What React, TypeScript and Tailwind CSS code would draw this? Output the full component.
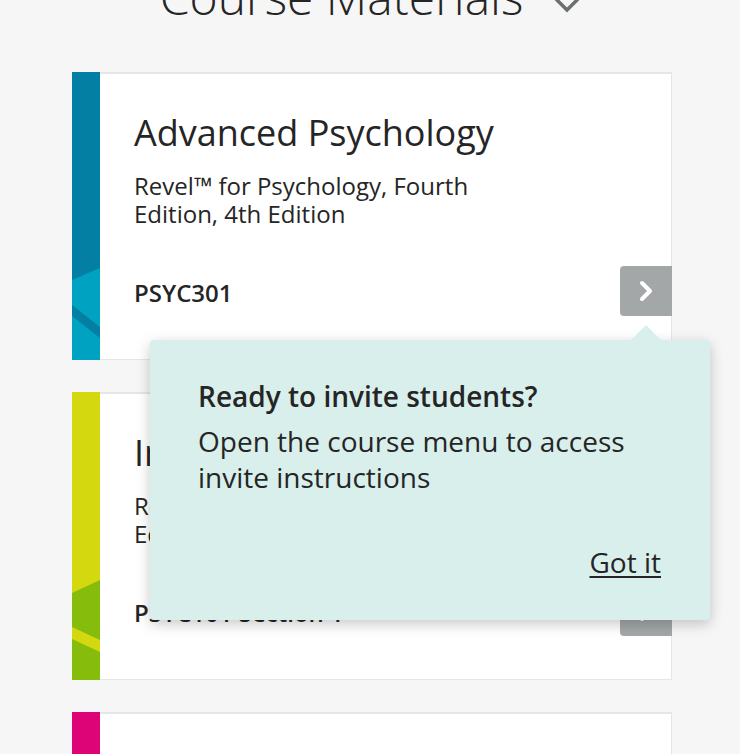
import { ChevronRight } from 'lucide-react';

type Course = {
  title: string;
  book: string;
  code: string;
  stripe: 'teal' | 'lime' | 'pink';
};

const courses: Course[] = [
  {
    title: 'Advanced Psychology',
    book: 'Revel™ for Psychology, Fourth Edition, 4th Edition',
    code: 'PSYC301',
    stripe: 'teal',
  },
  {
    title: 'Introduction to Psychology',
    book: 'Revel™ for Psychology, Fourth Edition, 4th Edition',
    code: 'PSYC101 Section 1',
    stripe: 'lime',
  },
  {
    title: 'Social Psychology',
    book: 'Revel™ for Social Psychology',
    code: 'PSYC210',
    stripe: 'pink',
  },
];

function Stripe({ kind }: { kind: Course['stripe'] }) {
  if (kind === 'pink') {
    return <div className="w-[28px] shrink-0 bg-[#dc0477]" />;
  }
  const teal = kind === 'teal';
  return (
    <svg className="w-[28px] shrink-0 h-full" viewBox="0 0 28 288" preserveAspectRatio="none">
      <rect width="28" height="288" fill={teal ? '#037fa3' : '#d3d90e'} />
      {teal ? (
        <>
          <polygon points="0,208 28,196 28,288 0,288" fill="#00a2c2" />
          <polygon points="0,233 28,255 28,266 0,244" fill="#037fa3" />
        </>
      ) : (
        <>
          <polygon points="0,201 28,188 28,288 0,288" fill="#86bc0b" />
          <polygon points="0,235 28,248 28,260 0,247" fill="#d3d90e" />
        </>
      )}
    </svg>
  );
}

function CourseCard({ course }: { course: Course }) {
  return (
    <div className="flex h-[288px] w-[600px]">
      <Stripe kind={course.stripe} />
      <div className="flex flex-1 bg-white border-t-2 border-r border-b border-[#e6e6e6]">
        <div className="flex-1 pl-[34px] pt-[35px] flex flex-col">
          <h2 className="text-[36px] leading-[48px] text-[#252525] whitespace-nowrap">{course.title}</h2>
          <p className="mt-[15px] max-w-[380px] text-[24px] leading-[28px] text-[#252525]">{course.book}</p>
          <p className="mt-[49px] text-[24px] leading-[32px] font-semibold text-[#252525]">{course.code}</p>
        </div>
        <div className="flex items-end pb-[43px] -mr-px">
          <button className="w-[52px] h-[50px] rounded-l-[4px] bg-[#a3a7a8] flex items-center justify-center text-white">
            <ChevronRight className="w-[32px] h-[32px]" strokeWidth={3} />
          </button>
        </div>
      </div>
    </div>
  );
}

export default function App() {
  return (
    <div
      className="relative h-[754px] w-[740px] overflow-hidden bg-[#f6f6f6]"
      style={{ fontFamily: '"Open Sans", "Noto Sans", sans-serif' }}
    >
      {/* Page heading, scrolled partly out of view */}
      <div className="-mt-[33px] flex items-start justify-center gap-[31px] text-[#252525]">
        <h1 className="text-[48px] leading-[60px] font-light">Course Materials</h1>
        <svg className="mt-[30px] w-[26px] h-[16px]" viewBox="0 0 26 16" fill="none">
          <polyline points="2,2 13,13 24,2" stroke="#6a7070" strokeWidth="3.5" />
        </svg>
      </div>

      <div className="ml-[72px] mt-[45px] flex flex-col gap-[32px]">
        {courses.map((c) => (
          <CourseCard key={c.code} course={c} />
        ))}
      </div>

      {/* Invite tooltip */}
      <div className="absolute left-[150px] top-[340px] w-[560px] h-[280px] rounded-[4px] bg-[#d9efeb] shadow-[0_4px_14px_rgba(0,0,0,0.22)] pl-[48px] pr-[49px] pt-[38px] text-[#252525]">
        <div className="absolute -top-[15px] left-[480px] w-0 h-0 border-l-[16px] border-r-[16px] border-b-[16px] border-l-transparent border-r-transparent border-b-[#d9efeb]" />
        <h3 className="text-[28px] leading-[36px] font-semibold">Ready to invite students?</h3>
        <p className="mt-[9px] text-[28px] leading-[36px]">Open the course menu to access invite instructions</p>
        <div className="mt-[49px] flex justify-end">
          <button className="text-[28px] leading-[36px] underline underline-offset-[3px] decoration-2">Got it</button>
        </div>
      </div>
    </div>
  );
}
